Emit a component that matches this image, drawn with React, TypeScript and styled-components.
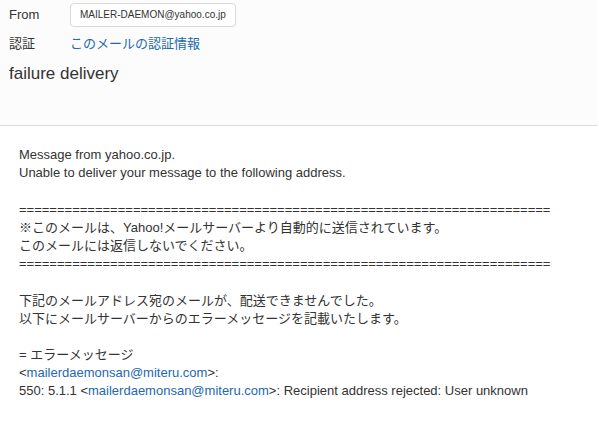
import React from "react";
import styled, { createGlobalStyle } from "styled-components";

const GlobalStyle = createGlobalStyle`
  html, body { margin: 0; padding: 0; background: #ffffff; }
  body {
    font-family: "Liberation Sans", Arial, "Noto Sans CJK JP", sans-serif;
    color: #333333;
  }
`;

const Page = styled.div`
  width: 599px;
  min-height: 422px;
  background: #ffffff;
`;

const Header = styled.header`
  background: #fcfcfc;
  border-bottom: 1px solid #dcdcdc;
  padding: 3px 0 40px 9px;
  margin-right: 2px;
`;

const FieldRow = styled.div<{ $gap?: number }>`
  display: flex;
  align-items: center;
  margin-top: ${(p) => p.$gap ?? 0}px;
  font-size: 13px;
  line-height: 18px;
`;

const Label = styled.span`
  width: 61px;
  flex: none;
`;

const AddressBox = styled.span`
  display: inline-flex;
  align-items: center;
  box-sizing: border-box;
  height: 24px;
  padding: 0 9px 0 9px;
  border: 1px solid #d9d9d9;
  border-radius: 4px;
  background: #ffffff;
  font-size: 10px;
  color: #333333;
`;

const Link = styled.a`
  color: #2368b0;
  text-decoration: none;
`;

const Subject = styled.h1`
  margin: 10px 0 0 0;
  font-size: 17px;
  line-height: 22px;
  font-weight: normal;
  color: #333333;
`;

const Body = styled.div`
  padding: 20px 0 0 19px;
  font-size: 13px;
  line-height: 18.2px;
  white-space: pre;
  color: #333333;
`;

const Line = styled.div`
  height: 18.2px;
`;

const SEP = "=".repeat(70);

export default function App() {
  return (
    <Page>
      <GlobalStyle />
      <Header>
        <FieldRow>
          <Label>From</Label>
          <AddressBox>MAILER-DAEMON@yahoo.co.jp</AddressBox>
        </FieldRow>
        <FieldRow $gap={8}>
          <Label>認証</Label>
          <Link href="#">このメールの認証情報</Link>
        </FieldRow>
        <Subject>failure delivery</Subject>
      </Header>
      <Body>
        <Line>Message from yahoo.co.jp.</Line>
        <Line>Unable to deliver your message to the following address.</Line>
        <Line />
        <Line>{SEP}</Line>
        <Line>※このメールは、Yahoo!メールサーバーより自動的に送信されています。</Line>
        <Line>このメールには返信しないでください。</Line>
        <Line>{SEP}</Line>
        <Line />
        <Line>下記のメールアドレス宛のメールが、配送できませんでした。</Line>
        <Line>以下にメールサーバーからのエラーメッセージを記載いたします。</Line>
        <Line />
        <Line>= エラーメッセージ</Line>
        <Line>
          &lt;<Link href="#">mailerdaemonsan@miteru.com</Link>&gt;:
        </Line>
        <Line>
          550: 5.1.1 &lt;<Link href="#">mailerdaemonsan@miteru.com</Link>&gt;: Recipient address rejected: User unknown
        </Line>
      </Body>
    </Page>
  );
}
